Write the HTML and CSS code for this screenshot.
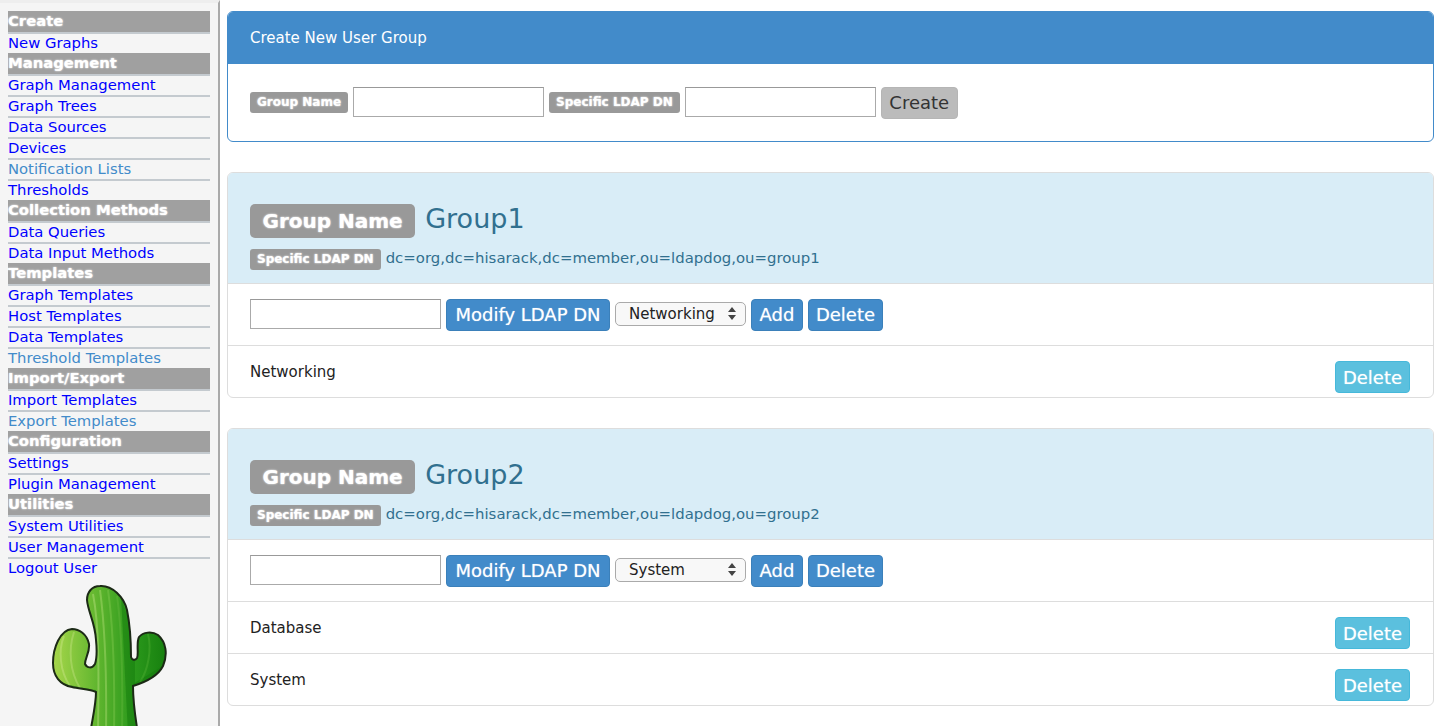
FILE: index.html
```html
<!DOCTYPE html>
<html lang="en">
<head>
    <meta charset="UTF-8">
    <meta name="viewport" content="width=device-width, initial-scale=1.0">
    <title>User Groups</title>
    <link rel="stylesheet" href="styles.css">
</head>
<body>
    <div class="sidebar">
        <ul class="menu">
            <li class="menu-head">Create</li>
            <li><a href="#">New Graphs</a></li>
            <li class="menu-head">Management</li>
            <li><a href="#">Graph Management</a></li>
            <li><a href="#">Graph Trees</a></li>
            <li><a href="#">Data Sources</a></li>
            <li><a href="#">Devices</a></li>
            <li><a href="#" class="seen">Notification Lists</a></li>
            <li><a href="#">Thresholds</a></li>
            <li class="menu-head">Collection Methods</li>
            <li><a href="#">Data Queries</a></li>
            <li><a href="#">Data Input Methods</a></li>
            <li class="menu-head">Templates</li>
            <li><a href="#">Graph Templates</a></li>
            <li><a href="#">Host Templates</a></li>
            <li><a href="#">Data Templates</a></li>
            <li><a href="#" class="seen">Threshold Templates</a></li>
            <li class="menu-head">Import/Export</li>
            <li><a href="#">Import Templates</a></li>
            <li><a href="#" class="seen">Export Templates</a></li>
            <li class="menu-head">Configuration</li>
            <li><a href="#">Settings</a></li>
            <li><a href="#">Plugin Management</a></li>
            <li class="menu-head">Utilities</li>
            <li><a href="#">System Utilities</a></li>
            <li><a href="#">User Management</a></li>
            <li><a href="#">Logout User</a></li>
        </ul>
        <div class="logo">
            <svg width="120" height="150" viewBox="50 584 120 150">
                <defs>
                    <linearGradient id="cactusFill" x1="0" y1="0" x2="1" y2="0">
                        <stop offset="0" stop-color="#a6d64a"/>
                        <stop offset="0.4" stop-color="#5fb52e"/>
                        <stop offset="0.7" stop-color="#2c9a1c"/>
                        <stop offset="1" stop-color="#17800f"/>
                    </linearGradient>
                    <clipPath id="cactusClip">
                        <path id="cactusShape" d="M100 586 C92 586 87 592 87 600 C88 612 95 622 96 640 C97 650 97 658 95 664 C92 669 87 668 85 664 C85 658 90 652 89 644 C87 634 79 629 72 629 C60 630 53 648 53 663 C53 676 60 685 72 687 C80 689 90 689 96 692 C96 704 93 716 90 734 L138 734 C135 716 133 700 133 686 C146 682 158 676 163 666 C168 654 166 642 158 635 C152 631 143 632 139 637 C136 643 139 654 137 658 C135 661 132 660 131 657 C131 640 130 625 127 610 C124 597 112 585 100 586 Z"/>
                    </clipPath>
                </defs>
                <use href="#cactusShape" fill="url(#cactusFill)"/>
                <g clip-path="url(#cactusClip)" fill="none">
                    <path d="M53 680 C70 686 85 688 96 690 L96 700 C80 694 62 692 53 685 Z" fill="#2f8a1c" opacity="0.6"/>
                    <path d="M133 684 L166 664 L166 680 L133 700 Z" fill="#137a0c" opacity="0.5"/>
                    <path d="M121 596 L135 640 L135 734 L128 734 Z" fill="#137a0c" opacity="0.5"/>
                    <path d="M100 590 C104 620 107 660 106 734" stroke="#b6e07a" stroke-width="2" opacity="0.4"/>
                    <path d="M93 594 C99 625 99 665 98 734" stroke="#c2e68a" stroke-width="2" opacity="0.4"/>
                    <path d="M108 590 C113 625 115 665 114 734" stroke="#8fd05a" stroke-width="2" opacity="0.35"/>
                    <path d="M117 596 C122 630 123 670 122 734" stroke="#6fbe45" stroke-width="2" opacity="0.35"/>
                    <path d="M64 636 C58 650 60 672 70 686" stroke="#cfe98e" stroke-width="2" opacity="0.4"/>
                    <path d="M74 632 C68 650 70 672 80 688" stroke="#cfe98e" stroke-width="2" opacity="0.35"/>
                    <path d="M148 634 C152 650 148 670 140 682" stroke="#5cb83a" stroke-width="2" opacity="0.35"/>
                </g>
                <use href="#cactusShape" fill="none" stroke="#1c2a16" stroke-width="2"/>
            </svg>
        </div>
    </div>

    <div class="main">
        <div class="panel panel-primary">
            <div class="panel-heading">Create New User Group</div>
            <div class="create-body">
                <span class="label">Group Name</span>
                <input type="text" class="field">
                <span class="label">Specific LDAP DN</span>
                <input type="text" class="field">
                <button class="btn btn-grey">Create</button>
            </div>
        </div>

        <div class="panel">
            <div class="group-head">
                <h3><span class="label label-big">Group Name</span><span class="group-name">Group1</span></h3>
                <p class="dn"><span class="label">Specific LDAP DN</span><span class="dn-text">dc=org,dc=hisarack,dc=member,ou=ldapdog,ou=group1</span></p>
            </div>
            <div class="row row-form">
                <input type="text" class="field">
                <button class="btn btn-modify">Modify LDAP DN</button>
                <div class="picker">Networking<svg width="8" height="13" viewBox="0 0 8 13"><path d="M4 0 L8 5 L0 5 Z M4 13 L8 8 L0 8 Z" fill="#444"/></svg></div>
                <button class="btn btn-add">Add</button>
                <button class="btn btn-delete">Delete</button>
            </div>
            <div class="row row-item">
                <span>Networking</span>
                <button class="btn btn-delete btn-info">Delete</button>
            </div>
        </div>

        <div class="panel">
            <div class="group-head">
                <h3><span class="label label-big">Group Name</span><span class="group-name">Group2</span></h3>
                <p class="dn"><span class="label">Specific LDAP DN</span><span class="dn-text">dc=org,dc=hisarack,dc=member,ou=ldapdog,ou=group2</span></p>
            </div>
            <div class="row row-form">
                <input type="text" class="field">
                <button class="btn btn-modify">Modify LDAP DN</button>
                <div class="picker">System<svg width="8" height="13" viewBox="0 0 8 13"><path d="M4 0 L8 5 L0 5 Z M4 13 L8 8 L0 8 Z" fill="#444"/></svg></div>
                <button class="btn btn-add">Add</button>
                <button class="btn btn-delete">Delete</button>
            </div>
            <div class="row row-item">
                <span>Database</span>
                <button class="btn btn-delete btn-info">Delete</button>
            </div>
            <div class="row row-item">
                <span>System</span>
                <button class="btn btn-delete btn-info">Delete</button>
            </div>
        </div>
    </div>
</body>
</html>
```

FILE: styles.css
```css
html, body {
    height: 100%;
    overflow: hidden;
}
body {
    margin: 0;
    display: flex;
    font-family: "DejaVu Sans", Verdana, sans-serif;
    color: #333;
    background: white;
}
.sidebar {
    width: 218px;
    flex: none;
    height: 726px;
    background: #f5f5f5;
    border-right: 2px solid #aaa;
    border-top: 3px solid #eee;
    display: flex;
    flex-direction: column;
    overflow: hidden;
}
.menu {
    list-style: none;
    margin: 8px 8px 0;
    padding: 0;
    font-size: 14.8px;
}
.menu li {
    height: 19px;
    line-height: 17px;
    border-top: 2px solid #c4cacf;
    white-space: nowrap;
}
.menu a {
    color: #0000ff;
    text-decoration: none;
}
.menu a.seen {
    color: #428bca;
}
.menu .menu-head {
    height: 21px;
    line-height: 20px;
    border-top: none;
    background: #a0a0a0;
    color: white;
    font-weight: bold;
    text-shadow: 0 0 2px white;
}
.logo {
    flex: 1;
    padding: 6px 0 0 50px;
    overflow: hidden;
}
.main {
    flex: 1;
    padding: 11px 6px 0 7px;
    min-width: 0;
}
.panel {
    border: 1px solid #ddd;
    border-radius: 6px;
    margin-bottom: 30px;
    background: white;
    overflow: hidden;
}
.panel-primary {
    border-color: #428bca;
}
.panel-heading {
    height: 52px;
    line-height: 52px;
    padding: 0 22px;
    background: #428bca;
    color: white;
    font-size: 15px;
}
.create-body {
    height: 77px;
    padding: 0 22px;
    display: flex;
    align-items: center;
    gap: 5px;
}
.label {
    display: inline-block;
    background: #999;
    color: white;
    font-size: 12px;
    font-weight: bold;
    line-height: 21px;
    height: 21px;
    padding: 0 7px;
    border-radius: 3px;
    white-space: nowrap;
    text-shadow: 0 0 2px white;
    vertical-align: middle;
}
.field {
    box-sizing: border-box;
    width: 191px;
    height: 30px;
    border: 1px solid #aaa;
    border-top-color: #999;
    background: white;
    padding: 0;
    margin: 0 0 2px;
}
.btn {
    font-family: inherit;
    font-size: 18px;
    height: 32px;
    padding: 0;
    border: 1px solid #3b80ba;
    border-radius: 4px;
    background: #428bca;
    color: white;
    white-space: nowrap;
    text-shadow: 0 0 1px rgba(255, 255, 255, 0.6);
}
.btn-modify {
    width: 164px;
}
.btn-add {
    width: 52px;
}
.btn-delete {
    width: 75px;
}
.btn-grey {
    width: 77px;
    background: #bbb;
    border-color: #b5b5b5;
    color: #333;
    text-shadow: none;
}
.btn-info {
    background: #5bc0de;
    border-color: #46b8da;
}
.group-head {
    height: 111px;
    padding: 0 22px;
    background: #d9edf7;
    color: #31708f;
    box-sizing: border-box;
    border-bottom: 1px solid #ddd;
}
.group-head h3 {
    margin: 0;
    padding-top: 31px;
    font-size: 27px;
    font-weight: normal;
    height: 34px;
    display: flex;
    align-items: center;
    gap: 10px;
}
.group-name {
    margin-top: -5px;
}
.label-big {
    font-size: 20px;
    line-height: 34px;
    height: 34px;
    padding: 0 12.5px;
    border-radius: 5px;
}
.dn {
    margin: 11px 0 0;
    display: flex;
    align-items: center;
    gap: 5px;
    font-size: 14.9px;
    line-height: 21px;
    height: 21px;
}
.dn-text {
    margin-top: -3px;
}
.row {
    display: flex;
    align-items: center;
    padding: 0 23px 0 22px;
}
.row-form {
    height: 61px;
    gap: 5px;
    border-bottom: 1px solid #ddd;
}
.row-item {
    height: 51px;
    justify-content: space-between;
    font-size: 15px;
    color: #222;
    border-bottom: 1px solid #ddd;
}
.row-item:last-child {
    border-bottom: none;
}
.row-item .btn {
    margin-top: 15px;
    margin-bottom: 4px;
}
.picker {
    box-sizing: border-box;
    width: 131px;
    height: 24px;
    margin-bottom: 2px;
    display: flex;
    align-items: center;
    justify-content: space-between;
    padding: 0 9px 0 13px;
    border: 1px solid #aaa;
    border-radius: 5px;
    background: #f8f8f8;
    font-size: 15px;
    color: #222;
}
```
